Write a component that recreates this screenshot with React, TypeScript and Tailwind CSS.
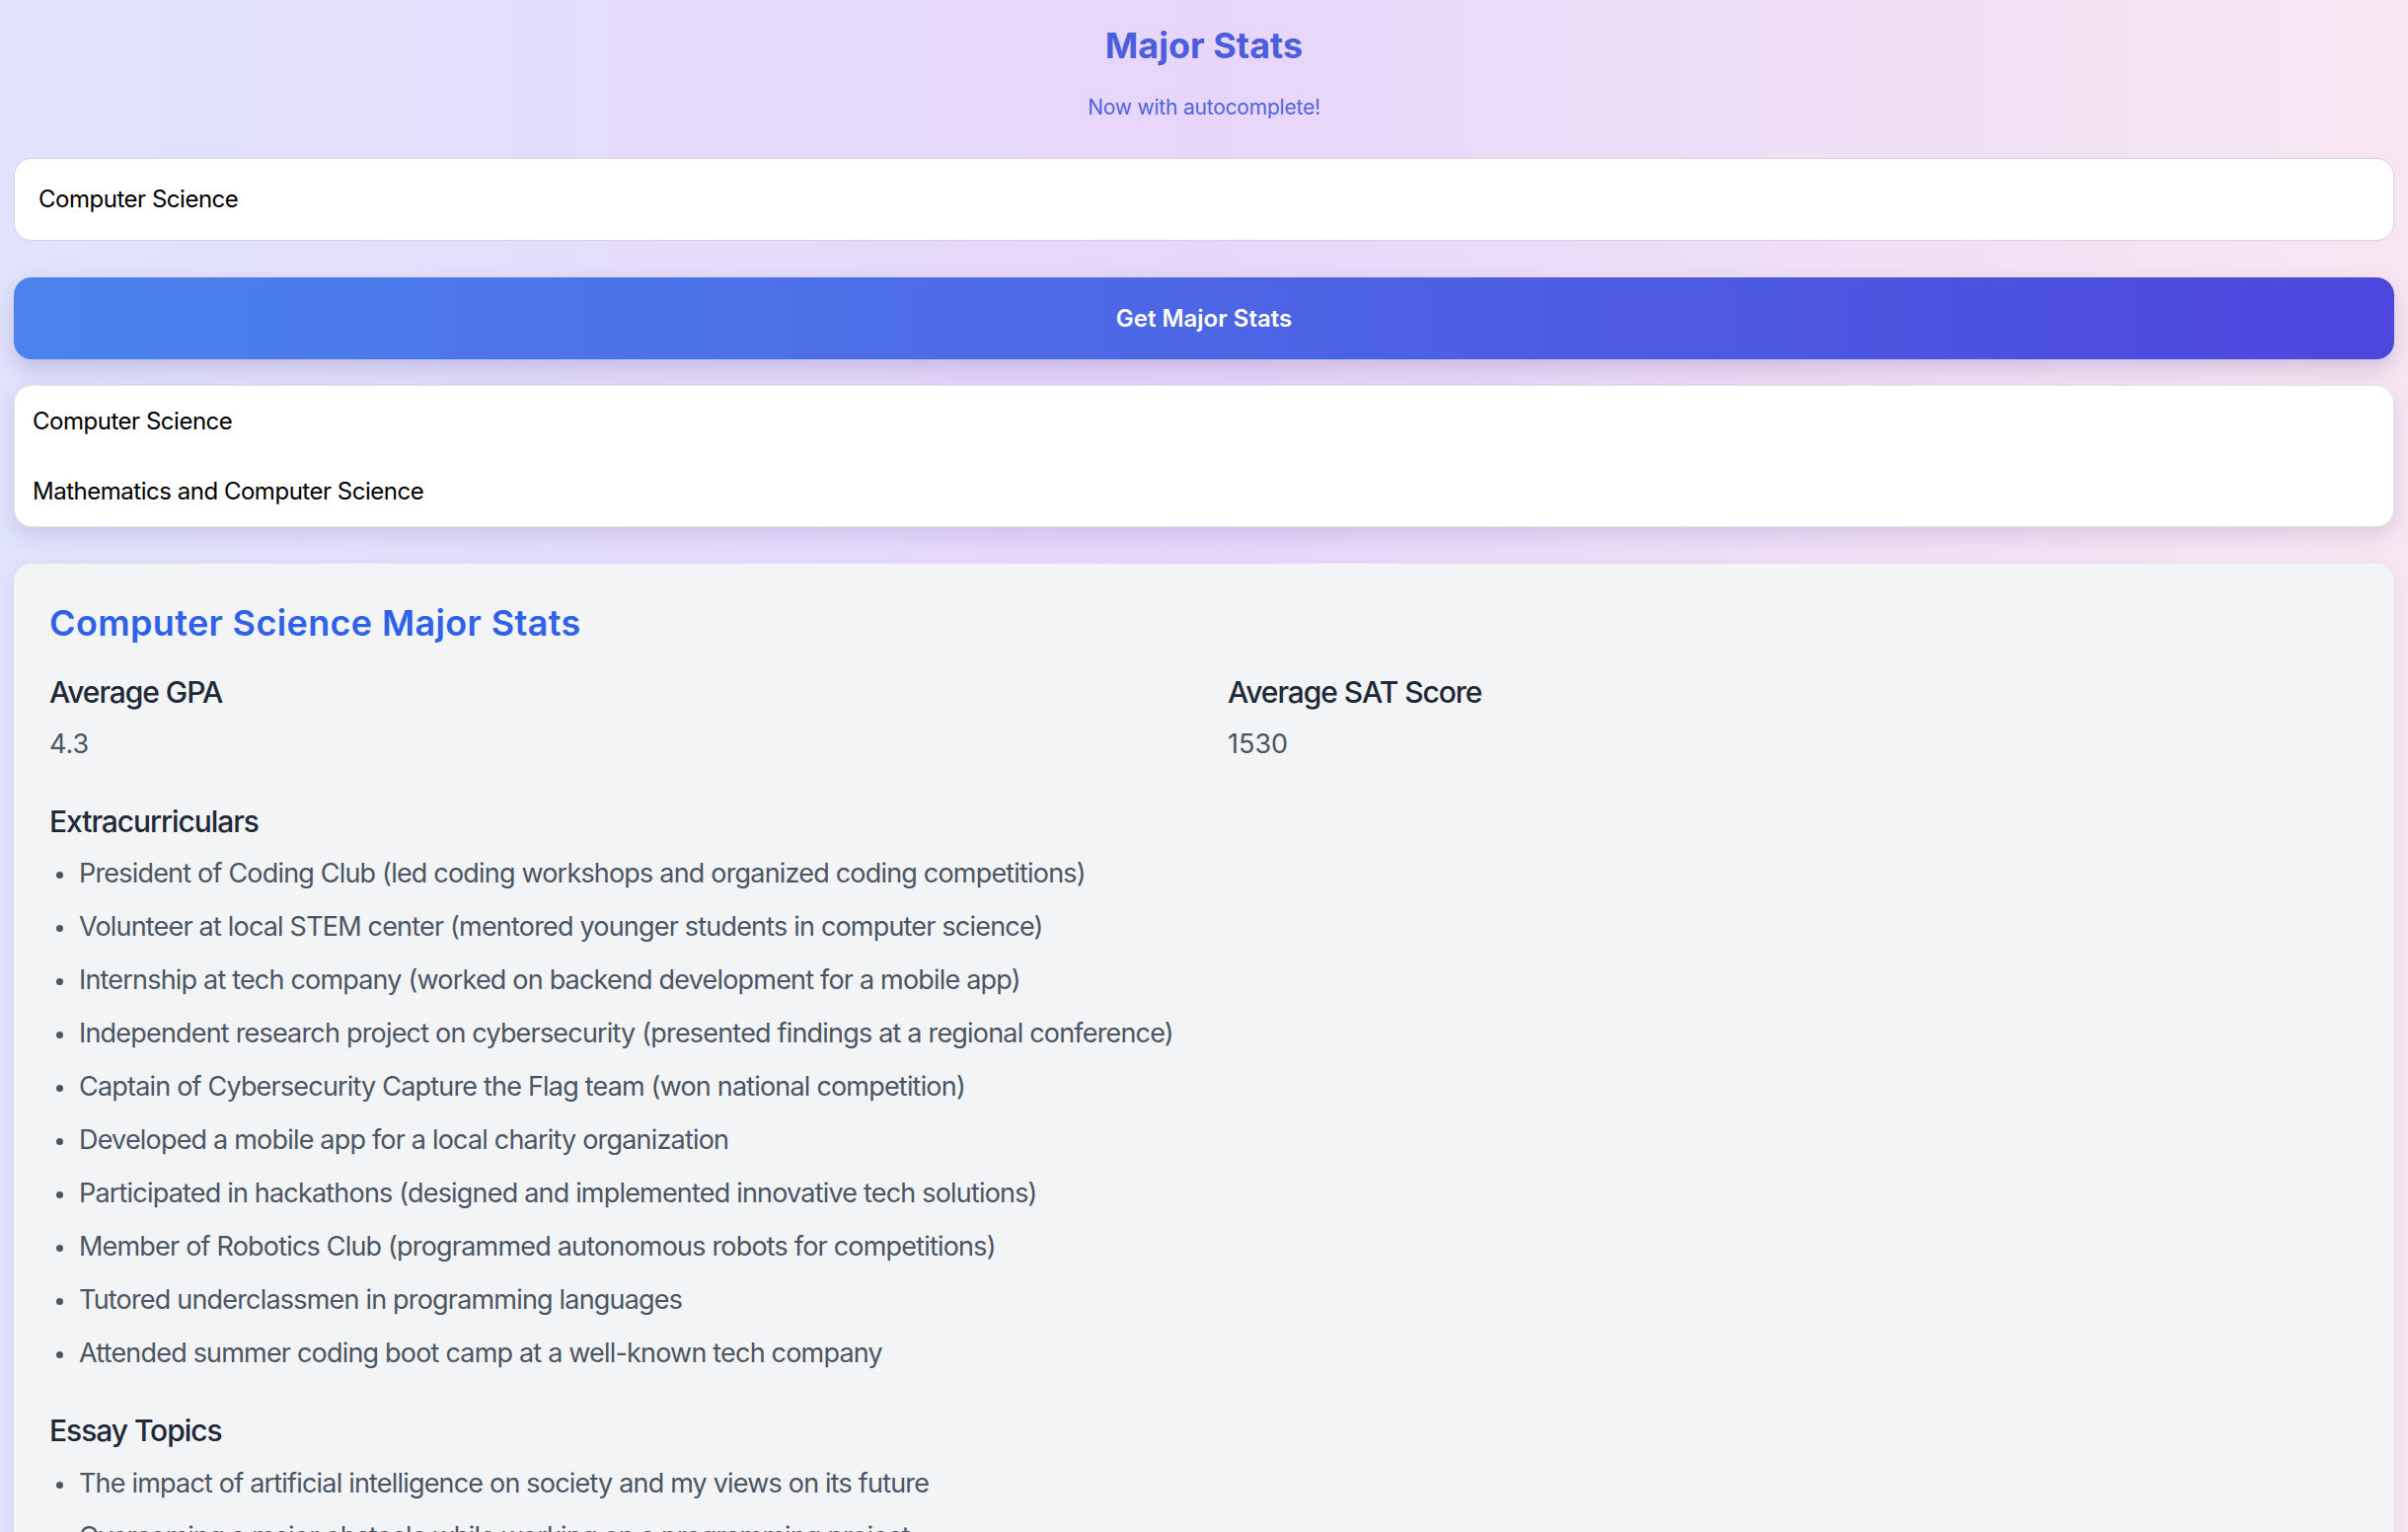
import React from "react";

const extracurriculars = [
  "President of Coding Club (led coding workshops and organized coding competitions)",
  "Volunteer at local STEM center (mentored younger students in computer science)",
  "Internship at tech company (worked on backend development for a mobile app)",
  "Independent research project on cybersecurity (presented findings at a regional conference)",
  "Captain of Cybersecurity Capture the Flag team (won national competition)",
  "Developed a mobile app for a local charity organization",
  "Participated in hackathons (designed and implemented innovative tech solutions)",
  "Member of Robotics Club (programmed autonomous robots for competitions)",
  "Tutored underclassmen in programming languages",
  "Attended summer coding boot camp at a well-known tech company",
];

const essays = [
  "The impact of artificial intelligence on society and my views on its future",
  "Overcoming a major obstacle while working on a programming project",
  "How a failed project taught me the value of persistence",
];

function Bullets({ items }: { items: string[] }) {
  return (
    <ul className="flex flex-col gap-[12px]">
      {items.map((t) => (
        <li key={t} className="flex items-center text-[27px] leading-[42px] tracking-[-0.03em] text-[#4b5563]">
          <span className="ml-[7px] mr-[16px] mt-[3px] inline-block h-[7px] w-[7px] shrink-0 rounded-full bg-[#4b5563]" />
          <span>{t}</span>
        </li>
      ))}
    </ul>
  );
}

const h3 = "text-[30px] font-medium leading-[42px] tracking-[-0.035em] text-[#1f2937]";

export default function App() {
  return (
    <div
      className="min-h-screen w-full bg-linear-to-r from-[#e0e3fb] via-[#e7d6fa] to-[#f7e6f1] px-[14px] pt-[22px] pb-[40px]"
      style={{ fontFamily: "Inter, 'Noto Sans', sans-serif" }}
    >
      <h1 className="text-center text-[36px] font-bold leading-[48px] text-[#4c5edc]">Major Stats</h1>
      <p className="mt-[24px] text-center text-[21px] leading-[30px] tracking-[-0.01em] text-[#5064df]">
        Now with autocomplete!
      </p>

      <div className="mt-[36px] flex h-[84px] items-center rounded-[18px] border border-[#d6d3df] bg-white px-[24px] text-[24px] tracking-[-0.02em] text-black">
        Computer Science
      </div>

      <button className="mt-[37px] flex h-[83px] w-full items-center justify-center rounded-[18px] bg-linear-to-r from-[#4b82ed] to-[#4c46dd] text-[24px] font-semibold text-white shadow-[0_10px_20px_rgba(90,70,150,0.22)]">
        Get Major Stats
      </button>

      <div className="mt-[26px] overflow-hidden rounded-[18px] border border-[#e4e2ea] bg-white shadow-[0_8px_20px_rgba(90,70,140,0.16)]">
        <div className="flex h-[71px] items-center px-[18px] text-[24px] tracking-[-0.02em] text-black">Computer Science</div>
        <div className="flex h-[71px] items-center px-[18px] text-[24px] tracking-[-0.02em] text-black">
          Mathematics and Computer Science
        </div>
      </div>

      <div className="mt-[37px] rounded-[18px] bg-[#f3f4f6] p-[36px] shadow-[0_4px_12px_rgba(90,70,140,0.10)]">
        <h2 className="text-[36px] font-semibold leading-[48px] tracking-[0.01em] text-[#2f62e6]">
          Computer Science Major Stats
        </h2>

        <div className="mt-[25px] grid grid-cols-2 gap-[48px]">
          <div>
            <h3 className={h3}>Average GPA</h3>
            <p className="mt-[11px] text-[27px] leading-[42px] text-[#4b5563]">4.3</p>
          </div>
          <div>
            <h3 className={h3}>Average SAT Score</h3>
            <p className="mt-[11px] text-[27px] leading-[42px] text-[#4b5563]">1530</p>
          </div>
        </div>

        <h3 className={`mt-[36px] ${h3}`}>Extracurriculars</h3>
        <div className="mt-[11px]">
          <Bullets items={extracurriculars} />
        </div>

        <h3 className={`mt-[36px] ${h3}`}>Essay Topics</h3>
        <div className="mt-[12px]">
          <Bullets items={essays} />
        </div>
      </div>
    </div>
  );
}
